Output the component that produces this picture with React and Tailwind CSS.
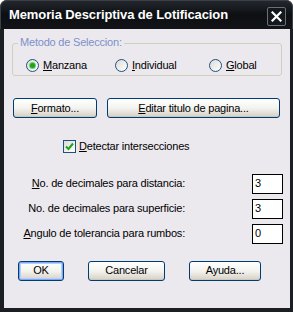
import React from 'react'

function Mn({ children }) {
  return <span className="underline underline-offset-[1px]">{children}</span>
}

function XpButton({ children, className = '', primary = false }) {
  return (
    <button
      className={`h-[20px] rounded-[3px] border text-[11px] tracking-[-0.2px] text-black bg-gradient-to-b from-white via-[#f3f3ef] to-[#d6d0c5] ${
        primary ? 'border-[#003c74] shadow-[inset_0_0_0_1px_#7fa6f2,inset_0_0_0_2px_#b6cff8]' : 'border-[#003c74] shadow-[inset_0_-1px_0_#cdc7ba]'
      } ${className}`}
    >
      {children}
    </button>
  )
}

function Radio({ checked, children }) {
  return (
    <label className="flex items-center">
      <span className="w-[13px] h-[13px] rounded-full border border-[#1c5180] bg-gradient-to-br from-[#dcdbd5] to-white flex items-center justify-center">
        {checked && <span className="w-[5px] h-[5px] rounded-full bg-[#21a121] shadow-[0_0_0_1px_#6fd36f]" />}
      </span>
      <span className="ml-[4px]">{children}</span>
    </label>
  )
}

export default function App() {
  return (
    <div
      className="w-[293px] h-[312px] bg-[#1b1e23] rounded-t-[7px] flex flex-col text-[11px] tracking-[-0.2px] text-black"
      style={{ fontFamily: '"Liberation Sans", Arial, sans-serif' }}
    >
      {/* Title bar */}
      <div className="h-[29px] shrink-0 flex items-center justify-between pl-[8px] pr-[6px] rounded-t-[7px] border-t border-x border-[#3b4047] bg-gradient-to-b from-[#23272d] via-[#0d0f12] to-[#121418]">
        <span className="text-white font-bold text-[13px] tracking-[-0.1px]">Memoria Descriptiva de Lotificacion</span>
        <div className="w-[19px] h-[19px] rounded-[2px] border border-[#6b7078] bg-[#14171b] flex items-center justify-center mt-[2px]">
          <svg width="11" height="11" viewBox="0 0 11 11">
            <path d="M1.5 1.5 L9.5 9.5 M9.5 1.5 L1.5 9.5" stroke="white" strokeWidth="2.2" strokeLinecap="square" />
          </svg>
        </div>
      </div>

      {/* Client area */}
      <div className="flex-1 ml-[4px] mr-[3px] mb-[4px] bg-[#ece9ee] flex flex-col">
        {/* Group box */}
        <div className="relative mt-[14px] ml-[8px] w-[270px] h-[33px] border border-[#d0d0bf] rounded-[3px]">
          <span className="absolute left-[5px] -top-[10px] px-[2px] bg-[#ece9ee] text-[#7d90c9]">Metodo de Seleccion:</span>
          <div className="flex items-center mt-[13px] ml-[13px]">
            <div className="w-[89px]">
              <Radio checked><Mn>M</Mn>anzana</Radio>
            </div>
            <div className="w-[94px]">
              <Radio><Mn>I</Mn>ndividual</Radio>
            </div>
            <Radio><Mn>G</Mn>lobal</Radio>
          </div>
        </div>

        {/* Buttons */}
        <div className="flex mt-[22px] ml-[9px]">
          <XpButton className="w-[84px]"><Mn>F</Mn>ormato...</XpButton>
          <XpButton className="w-[173px] ml-[10px]"><Mn>E</Mn>ditar titulo de pagina...</XpButton>
        </div>

        {/* Checkbox */}
        <div className="flex items-center mt-[20px] ml-[59px]">
          <span className="w-[13px] h-[13px] border border-[#1c5180] bg-gradient-to-br from-[#dcdbd5] to-white flex items-center justify-center">
            <svg width="9" height="9" viewBox="0 0 9 9">
              <path d="M1 4.5 L3.5 7 L8 1.5" fill="none" stroke="#21a121" strokeWidth="2" />
            </svg>
          </span>
          <span className="ml-[3px]"><Mn>D</Mn>etectar intersecciones</span>
        </div>

        {/* Numeric fields */}
        <div className="flex flex-col gap-[5px] mt-[19px]">
          {[
            [<><Mn>N</Mn>o. de decimales para distancia:</>, '3'],
            ['No. de decimales para superficie:', '3'],
            [<><Mn>A</Mn>ngulo de tolerancia para rumbos:</>, '0'],
          ].map(([label, value], i) => (
            <div key={i} className="flex items-center h-[20px]">
              <div className="w-[181px] text-right">{label}</div>
              <div className="ml-[67px] w-[31px] h-[20px] bg-white border border-black px-[2px] flex items-center">{value}</div>
            </div>
          ))}
        </div>

        {/* Bottom buttons */}
        <div className="flex mt-[17px] ml-[14px]">
          <XpButton primary className="w-[46px]">OK</XpButton>
          <XpButton className="w-[77px] ml-[24px]">Cancelar</XpButton>
          <XpButton className="w-[72px] ml-[24px]">Ayuda...</XpButton>
        </div>
      </div>
    </div>
  )
}
